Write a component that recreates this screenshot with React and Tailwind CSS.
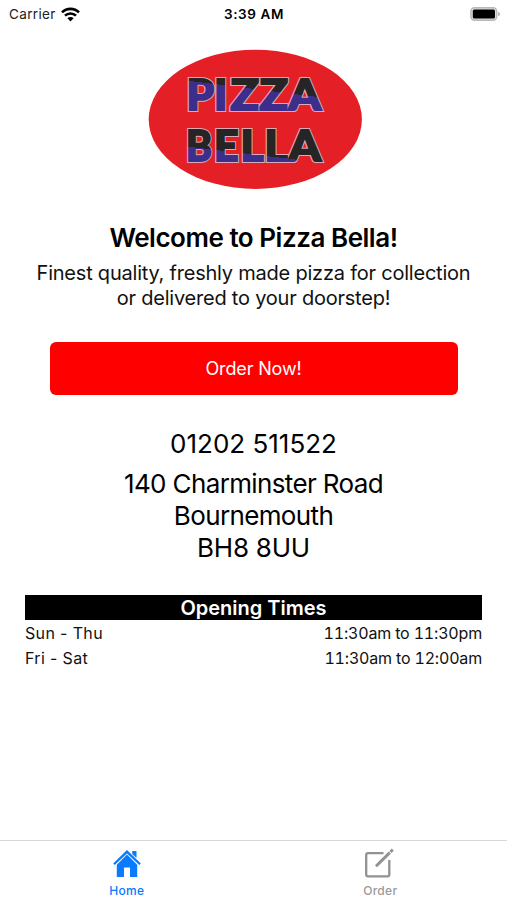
import React from "react";

const hours = [
  { days: "Sun - Thu", time: "11:30am to 11:30pm" },
  { days: "Fri - Sat", time: "11:30am to 12:00am" },
];

const topLetters = [
  { char: "P", x: 186.5, width: 27.5 },
  { char: "I", x: 214, width: 13.5 },
  { char: "Z", x: 230.5, width: 28.5 },
  { char: "Z", x: 259.5, width: 28.5 },
  { char: "A", x: 288.5, width: 32.5 },
];

const bottomLetters = [
  { char: "B", x: 186, width: 26 },
  { char: "E", x: 214, width: 24.5 },
  { char: "L", x: 240.5, width: 23 },
  { char: "L", x: 264.5, width: 23 },
  { char: "A", x: 288.5, width: 32.5 },
];

const StatusBar = () => {
  return (
    <div className="grid h-7 grid-cols-3 items-center pl-[9px] pr-[6px] text-[13.5px]">
      <div className="flex items-center gap-[5px]">
        <span className="tracking-[0.35px] text-[#222]">Carrier</span>
        <svg className="h-[15px] w-[19px]" viewBox="0 0 19 15">
          <g fill="none" stroke="#000" strokeWidth="2.6">
            <path d="M1 5.4A12 12 0 0 1 18 5.4" />
            <path d="M4 8.7A7.8 7.8 0 0 1 15 8.7" />
          </g>
          <path d="M6.4 11.2A4.4 4.4 0 0 1 12.6 11.2L9.5 14.5Z" />
        </svg>
      </div>
      <div className="-ml-[2px] text-center font-semibold tracking-[0.6px]">3:39 AM</div>
      <div className="flex justify-end">
        <svg className="h-[15px] w-[31px]" viewBox="0 0 31 15">
          <rect x="0.9" y="0.7" width="25.8" height="12.6" rx="3.5" fill="#ddd" stroke="#b8b8b8" strokeWidth="1.4" />
          <rect x="2.8" y="2.6" width="22.2" height="9" rx="1.5" />
          <path d="M28 4.8Q30.2 5.6 30.2 7T28 9.2Z" fill="#b8b8b8" />
        </svg>
      </div>
    </div>
  );
};

const LogoWord = ({ letters, y, fill }) => {
  const renderLetters = () =>
    letters.map((l, i) => (
      <text key={i} x={l.x} y={y} textLength={l.width} lengthAdjust="spacingAndGlyphs">
        {l.char}
      </text>
    ));

  return (
    <>
      <g fill="#dca9b8" stroke="#dca9b8" strokeWidth="4">
        {renderLetters()}
      </g>
      <g fill={fill} stroke={fill} strokeWidth="1.9">
        {renderLetters()}
      </g>
    </>
  );
};

const Logo = () => {
  return (
    <svg className="mx-auto h-[140px] w-[217px]" viewBox="145 49 217 140">
      <defs>
        <linearGradient id="pizza" gradientUnits="userSpaceOnUse" x1="255" y1="79" x2="252.5" y2="99">
          <stop offset="0.5" stopColor="#262424" />
          <stop offset="0.5" stopColor="#3c2f8c" />
        </linearGradient>
        <linearGradient id="bella" gradientUnits="userSpaceOnUse" x1="255" y1="144.500" x2="252.6" y2="164.500">
          <stop offset="0.5" stopColor="#262424" />
          <stop offset="0.5" stopColor="#3c2f8c" />
        </linearGradient>
      </defs>
      <ellipse cx="255.3" cy="119.3" rx="106.6" ry="69.6" fill="#e41f25" />
      <g fontFamily="Lato" fontWeight="900" fontSize="42">
        <LogoWord letters={topLetters} y="110" fill="url(#pizza)" />
        <LogoWord letters={bottomLetters} y="160.5" fill="url(#bella)" />
      </g>
    </svg>
  );
};

const TabBar = () => {
  return (
    <div className="grid h-[60px] grid-cols-2 border-t border-[#d8d8d8] text-[12px] font-medium">
      <div className="flex flex-col items-center pt-[7px] text-[#0a7aff]">
        <svg className="h-[30px] w-[30px]" viewBox="0 0 30 30" fill="#0a7aff">
          <path d="M20.2 3H24.500V10L20.200 6Z" />
          <path d="M1.200 15.500L15 2L28.800 15.500L27.300 17L15 5.400L2.700 17Z" />
          <path d="M4.800 16.800L15 6.600L25.200 16.800V29H18V19.500H12V29H4.800Z" />
        </svg>
        <span className="mt-[5px] leading-4 tracking-[0.3px]">Home</span>
      </div>
      <div className="flex flex-col items-center pt-[7px] text-[#999]">
        <svg className="h-[30px] w-[30px]" viewBox="0 0 30 30" fill="none" stroke="#929292" strokeWidth="2.3">
          <path d="M18.500 5.200H3Q1.200 5.200 1.200 7V26.500Q1.200 28.300 3 28.300H22.500Q24.300 28.300 24.300 26.500V12" />
          <path d="M11 18.200L24.800 4.600" strokeWidth="3" />
          <path d="M25.400 4L27.800 1.700" strokeWidth="3" />
        </svg>
        <span className="mt-[5px] leading-4 tracking-[0.3px]">Order</span>
      </div>
    </div>
  );
};

const App = () => {
  return (
    <div className="flex h-[900px] w-[507px] flex-col bg-white font-['Inter',sans-serif] text-black">
      <StatusBar />
      <div className="flex-1 pt-[21px] text-center">
        <Logo />
        <h1 className="mt-[33px] text-[26px] leading-8 font-semibold tracking-[-0.47px]">Welcome to Pizza Bella!</h1>
        <p className="mt-[7px] text-[20px] leading-[25px] tracking-[-0.22px] text-[#111]">
          Finest quality, freshly made pizza for collection
          <br />
          or delivered to your doorstep!
        </p>
        <button className="ml-[50px] mt-[31px] block h-[53px] w-[408px] rounded-[6px] bg-[#ff0000] pr-px text-[18px] tracking-[-0.15px] text-white">
          Order Now!
        </button>
        <p className="mt-[33px] text-[26px] leading-8">01202 511522</p>
        <p className="mt-[8px] text-[26px] leading-8 tracking-[-0.63px]">
          140 Charminster Road
          <br />
          Bournemouth
          <br />
          <span className="tracking-[-0.25px]">BH8 8UU</span>
        </p>
        <div className="mx-[25px] mt-[31px]">
          <h2 className="h-[25px] bg-black text-[20px] leading-[26px] font-semibold text-white">Opening Times</h2>
          {hours.map((row) => (
            <div key={row.days} className="flex h-[25px] items-center justify-between pt-px text-[16px] text-[#111]">
              <span className="tracking-[0.35px]">{row.days}</span>
              <span className="tracking-[-0.18px] tabular-nums">{row.time}</span>
            </div>
          ))}
        </div>
      </div>
      <TabBar />
    </div>
  );
};

export default App;
